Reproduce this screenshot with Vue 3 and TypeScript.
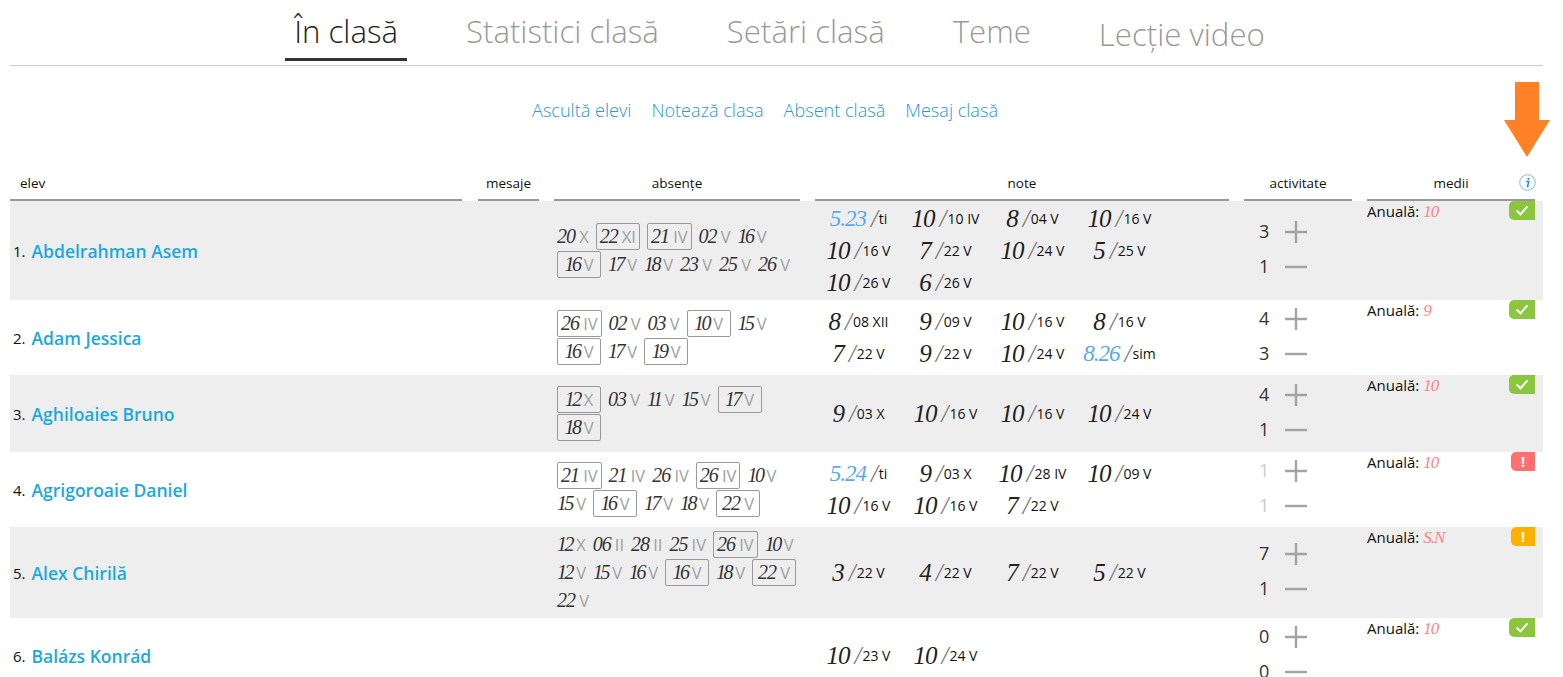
<script setup lang="ts">
// One absence: date, month and whether it is boxed (motivated)
interface Absence {
  day: string;
  month: string;
  boxed?: boolean;
}

interface Note {
  value: string;
  date: string;
  sim?: boolean;
}

interface Student {
  name: string;
  height: number;
  absences: Absence[][];
  notes: Note[];
  plus: number;
  minus: number;
  faded?: boolean;
  average: string;
  status: "ok" | "danger" | "warn";
}

const a = (day: string, month: string, boxed = false): Absence => ({ day, month, boxed });
const n = (value: string, date: string, sim = false): Note => ({ value, date, sim });

const tabs = ["În clasă", "Statistici clasă", "Setări clasă", "Teme", "Lecție video"];
const links = ["Ascultă elevi", "Notează clasa", "Absent clasă", "Mesaj clasă"];

const students: Student[] = [
  {
    name: "Abdelrahman Asem",
    height: 99,
    absences: [
      [a("20", "X"), a("22", "XI", true), a("21", "IV", true), a("02", "V"), a("16", "V")],
      [a("16", "V", true), a("17", "V"), a("18", "V"), a("23", "V"), a("25", "V"), a("26", "V")],
    ],
    notes: [
      n("5.23", "ti", true), n("10", "10 IV"), n("8", "04 V"), n("10", "16 V"),
      n("10", "16 V"), n("7", "22 V"), n("10", "24 V"), n("5", "25 V"),
      n("10", "26 V"), n("6", "26 V"),
    ],
    plus: 3,
    minus: 1,
    average: "10",
    status: "ok",
  },
  {
    name: "Adam Jessica",
    height: 75,
    absences: [
      [a("26", "IV", true), a("02", "V"), a("03", "V"), a("10", "V", true), a("15", "V")],
      [a("16", "V", true), a("17", "V"), a("19", "V", true)],
    ],
    notes: [
      n("8", "08 XII"), n("9", "09 V"), n("10", "16 V"), n("8", "16 V"),
      n("7", "22 V"), n("9", "22 V"), n("10", "24 V"), n("8.26", "sim", true),
    ],
    plus: 4,
    minus: 3,
    average: "9",
    status: "ok",
  },
  {
    name: "Aghiloaies Bruno",
    height: 77,
    absences: [
      [a("12", "X", true), a("03", "V"), a("11", "V"), a("15", "V"), a("17", "V", true)],
      [a("18", "V", true)],
    ],
    notes: [n("9", "03 X"), n("10", "16 V"), n("10", "16 V"), n("10", "24 V")],
    plus: 4,
    minus: 1,
    average: "10",
    status: "ok",
  },
  {
    name: "Agrigoroaie Daniel",
    height: 75,
    absences: [
      [a("21", "IV", true), a("21", "IV"), a("26", "IV"), a("26", "IV", true), a("10", "V")],
      [a("15", "V"), a("16", "V", true), a("17", "V"), a("18", "V"), a("22", "V", true)],
    ],
    notes: [
      n("5.24", "ti", true), n("9", "03 X"), n("10", "28 IV"), n("10", "09 V"),
      n("10", "16 V"), n("10", "16 V"), n("7", "22 V"),
    ],
    plus: 1,
    minus: 1,
    faded: true,
    average: "10",
    status: "danger",
  },
  {
    name: "Alex Chirilă",
    height: 91,
    absences: [
      [a("12", "X"), a("06", "II"), a("28", "II"), a("25", "IV"), a("26", "IV", true), a("10", "V")],
      [a("12", "V"), a("15", "V"), a("16", "V"), a("16", "V", true), a("18", "V"), a("22", "V", true)],
      [a("22", "V")],
    ],
    notes: [n("3", "22 V"), n("4", "22 V"), n("7", "22 V"), n("5", "22 V")],
    plus: 7,
    minus: 1,
    average: "S.N",
    status: "warn",
  },
  {
    name: "Balázs Konrád",
    height: 75,
    absences: [],
    notes: [n("10", "23 V"), n("10", "24 V")],
    plus: 0,
    minus: 0,
    average: "10",
    status: "ok",
  },
];
</script>

<template>
  <div class="page">
    <nav class="tabs">
      <a
        v-for="(tab, i) in tabs"
        :key="tab"
        :class="['tab', i === 0 ? 'active' : '', i === 4 ? 'low' : '']"
      >{{ tab }}</a>
    </nav>

    <div class="actions">
      <a v-for="link in links" :key="link">{{ link }}</a>
    </div>

    <!-- Arrow pointing at the info icon -->
    <svg class="arrow" width="46" height="76" viewBox="0 0 46 76">
      <polygon points="11,0 35,0 35,38 46,38 23,75 0,38 11,38" fill="#ff8126" />
    </svg>

    <div class="row head">
      <div class="cell c-name left">elev</div>
      <div class="cell c-msg">mesaje</div>
      <div class="cell c-abs">absențe</div>
      <div class="cell c-note">note</div>
      <div class="cell c-act">activitate</div>
      <div class="cell c-avg">
        medii
        <svg class="info" width="17" height="17" viewBox="0 0 17 17">
          <circle cx="8.5" cy="8.5" r="7.8" fill="none" stroke="#7fb8ec" stroke-width="1" />
          <circle cx="9.4" cy="4.8" r="1.1" fill="#2f86d6" />
          <path d="M7.2 7.4h2.6l-1.3 5.2h1.1" fill="none" stroke="#2f86d6" stroke-width="1.5" />
        </svg>
      </div>
    </div>

    <div
      v-for="(student, i) in students"
      :key="student.name"
      :class="['row', 'body', i % 2 === 0 ? 'even' : '']"
      :style="{ minHeight: student.height + 'px' }"
    >
      <div class="c-name name">
        <span class="num">{{ i + 1 }}.</span><a>{{ student.name }}</a>
      </div>
      <div class="c-msg"></div>
      <div class="c-abs absences">
        <div v-for="(line, l) in student.absences" :key="l" class="abs-line">
          <span
            v-for="(item, k) in line"
            :key="k"
            :class="['absence', item.boxed ? 'boxed' : '']"
          ><i :class="item.day.startsWith('1') ? 'narrow' : ''">{{ item.day }}</i> <span class="month">{{ item.month }}</span></span>
        </div>
      </div>
      <div class="c-note notes">
        <span v-for="(note, k) in student.notes" :key="k" class="note">
          <i :class="note.sim ? 'sim' : ''">{{ note.value }}</i>
          <i class="slash">/</i><span class="date">{{ note.date }}</span>
        </span>
      </div>
      <div class="c-act activity">
        <div class="act-line">
          <span :class="['count', student.faded ? 'faded' : '']">{{ student.plus }}</span>
          <svg width="24" height="24" viewBox="0 0 24 24">
            <path d="M1 12h22M12 1v22" stroke="#a3a3a3" stroke-width="2.4" fill="none" />
          </svg>
        </div>
        <div class="act-line">
          <span :class="['count', student.faded ? 'faded' : '']">{{ student.minus }}</span>
          <svg width="24" height="24" viewBox="0 0 24 24">
            <path d="M1 12h22" stroke="#a3a3a3" stroke-width="2.4" fill="none" />
          </svg>
        </div>
      </div>
      <div class="c-avg average">
        <span>Anuală: <i class="avg-value">{{ student.average }}</i></span>
        <span :class="['badge', student.status]">
          <svg v-if="student.status === 'ok'" width="14" height="11" viewBox="0 0 14 11">
            <path d="M1.5 5.5l4 3.8 7-8" stroke="#fff" stroke-width="2" fill="none" />
          </svg>
          <template v-else>!</template>
        </span>
      </div>
    </div>
  </div>
</template>

<style>
html,
body {
  overflow: hidden;
}
</style>

<style scoped>
.page {
  position: relative;
  margin: 0 20px 0 10px;
  font-family: "Open Sans", "Liberation Sans", sans-serif;
  color: #111;
}

.tabs {
  display: flex;
  justify-content: center;
  gap: 50px;
  height: 66px;
  padding-left: 6px;
  box-sizing: border-box;
  border-bottom: 1px solid #ccc;
}

.tab {
  height: 61px;
  box-sizing: border-box;
  padding: 8px 9px 0;
  font-size: 31.2px;
  font-weight: 300;
  line-height: 46px;
  color: #999;
}

.tab.active {
  color: #222;
  border-bottom: 3px solid #333;
}

.tab.low {
  padding-top: 11px;
}

.actions {
  display: flex;
  justify-content: center;
  gap: 20px;
  padding: 32px 23px 0 0;
  height: 71px;
  box-sizing: border-box;
  font-size: 18.1px;
  font-weight: 300;
  line-height: 24px;
  color: #2a96dc;
}

.arrow {
  position: absolute;
  top: 82px;
  right: -7px;
}

.row {
  display: grid;
  grid-template-columns: 453px 61px 246px 414px 108px 168px;
  column-gap: 15px;
  width: 1533px;
}

.row.head {
  margin-top: 34px;
}

.head .cell {
  position: relative;
  height: 30px;
  box-sizing: border-box;
  padding-top: 3px;
  border-bottom: 2px solid #999;
  text-align: center;
  font-size: 13.5px;
  line-height: 18px;
}

.head .left {
  margin-right: 1px;
  padding-left: 10px;
  text-align: left;
}

.info {
  position: absolute;
  top: 3px;
  right: -1px;
}

.body {
  align-items: stretch;
}

.even {
  background: #eee;
}

.name {
  display: flex;
  align-items: center;
  padding-left: 3px;
  font-size: 17.5px;
  font-weight: 600;
  color: #1ba8de;
}

.num {
  margin-right: 6px;
  font-size: 15px;
  font-weight: 400;
  color: #111;
}

.absences {
  display: flex;
  flex-direction: column;
  justify-content: center;
  padding-left: 3px;
}

.abs-line {
  display: flex;
  align-items: center;
  gap: 7px;
  height: 28px;
  white-space: nowrap;
}

.absence {
  font-size: 16px;
  line-height: 24px;
}

.absence i,
.note i,
.avg-value {
  font-family: "Liberation Serif", serif;
  font-style: italic;
}

.absence i {
  font-size: 20px;
  letter-spacing: -1px;
  color: #333;
}

.absence i.narrow {
  letter-spacing: -2.5px;
}

.month {
  font-size: 16.5px;
  color: #a0a0a0;
}

.boxed {
  min-width: 44px;
  box-sizing: border-box;
  padding: 0 3px;
  border: 1px solid #999;
  border-radius: 2px;
  text-align: center;
}

.notes {
  display: grid;
  grid-template-columns: repeat(4, 87px);
  grid-auto-rows: 32px;
  align-content: center;
}

.note {
  display: flex;
  align-items: center;
  justify-content: center;
  white-space: nowrap;
}

.note i {
  font-size: 25px;
  letter-spacing: -1px;
  color: #222;
}

.note i.sim {
  font-size: 23px;
  color: #5aa9e6;
}

.note i.slash {
  margin-left: 5px;
  font-size: 25px;
  color: #777;
}

.date {
  margin-left: 2px;
  font-size: 14px;
  color: #111;
}

.activity {
  display: flex;
  flex-direction: column;
  justify-content: center;
  padding-bottom: 2px;
}

.act-line {
  display: flex;
  align-items: center;
  height: 35px;
  padding-left: 15px;
  gap: 14px;
}

.count {
  width: 11px;
  padding-bottom: 2px;
  font-size: 18px;
  color: #333;
}

.count.faded {
  color: #ccc;
}

.average {
  display: flex;
  justify-content: space-between;
  align-items: flex-start;
  font-size: 15px;
  line-height: 20px;
}

.avg-value {
  font-size: 17px;
  letter-spacing: -1px;
  color: #ff8388;
}

.badge {
  display: flex;
  align-items: center;
  justify-content: center;
  width: 24px;
  height: 19px;
  border-radius: 5px 0 0 5px;
  font-size: 14px;
  font-weight: 700;
  color: #fff;
}

.badge.ok {
  width: 26px;
  background: #8cc63f;
}

.badge.danger {
  background: #ff6f72;
}

.badge.warn {
  background: #ffb000;
}
</style>
